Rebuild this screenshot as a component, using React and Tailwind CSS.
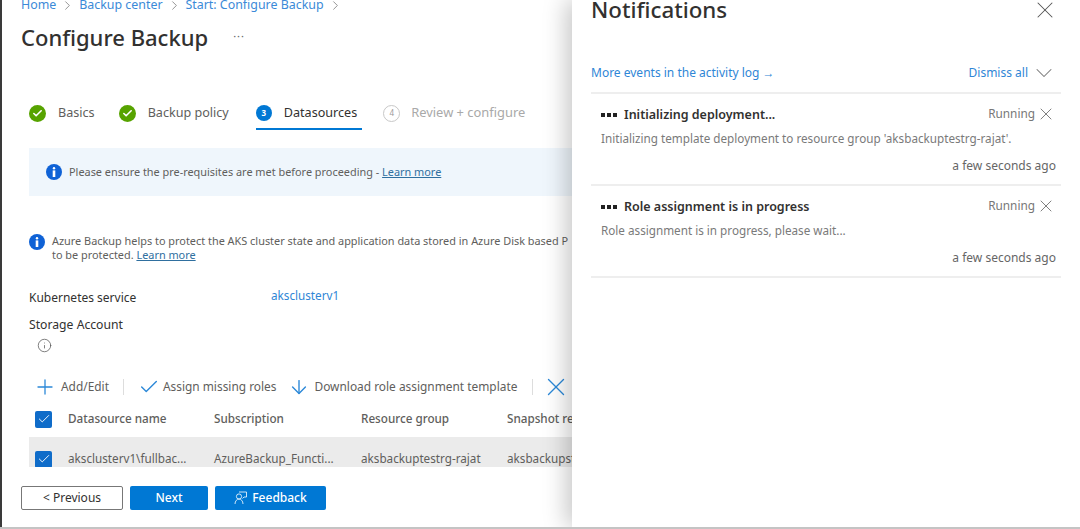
import React from "react";
import { Check, ChevronDown, ChevronRight, Plus, X, ArrowDown, Info } from "lucide-react";

const tableCols = ["w-[146px]", "w-[147px]", "w-[146px]", "w-[70px]"];

function Crumb({ label }) {
  return (
    <>
      <span className="text-[#3b8ad8]">{label}</span>
      <ChevronRight size={15} strokeWidth={1.1} className="text-[#666] mx-[4px]" />
    </>
  );
}

function Step({ done, num, label, active, muted, className }) {
  return (
    <div className={`flex items-center h-[32px] relative ${className}`}>
      {done && (
        <span className="w-[17px] h-[17px] rounded-full bg-[#57a300] flex items-center justify-center mr-[12px]">
          <Check size={11} strokeWidth={3.5} className="text-white" />
        </span>
      )}
      {active && (
        <span className="w-[16px] h-[16px] rounded-full bg-[#0078d4] text-white text-[8px] font-bold flex items-center justify-center mr-[12px]">
          {num}
        </span>
      )}
      {muted && (
        <span className="w-[17px] h-[17px] rounded-full border border-[#c8c8c8] text-[#999] text-[8px] flex items-center justify-center mr-[11px]">
          {num}
        </span>
      )}
      <span className={active ? "text-[#323130]" : muted ? "text-[#a9a9a9] text-[12.9px]" : "text-[#605e5c]"}>{label}</span>
      {active && <span className="absolute left-0 right-[-5px] bottom-[-1px] h-[2px] bg-[#0078d4]" />}
    </div>
  );
}

function CheckBox() {
  return (
    <span className="w-[17px] h-[17px] bg-[#0f6cc9] rounded-[2px] flex items-center justify-center shrink-0">
      <Check size={14} strokeWidth={1.6} className="text-white" />
    </span>
  );
}

function InfoDot() {
  return (
    <span className="w-[16px] h-[16px] rounded-full bg-[#0f62d6] flex items-center justify-center shrink-0 text-white">
      <svg width="4" height="10" viewBox="0 0 4 10">
        <circle cx="2" cy="1.2" r="1.2" fill="currentColor" />
        <rect x="0.7" y="3.4" width="2.6" height="6.6" fill="currentColor" />
      </svg>
    </span>
  );
}

function Notification({ title, body }) {
  return (
    <div className="border-b-2 border-[#eeeeee] h-[92px] pl-[10px] pr-[5px] flex flex-col">
      <div className="flex items-center h-[20px] mt-[11px]">
        <span className="flex gap-[2px] mr-[7px]">
          <i className="w-[4px] h-[4px] bg-[#222]" />
          <i className="w-[4px] h-[4px] bg-[#222]" />
          <i className="w-[4px] h-[4px] bg-[#222]" />
        </span>
        <span className="text-[12.5px] font-semibold text-[#323130]">{title}</span>
        <span className="ml-auto text-[11.8px] text-[#777] mb-[2px]">Running</span>
        <X size={20} strokeWidth={1} className="text-[#666] ml-[1px] mr-[0px] mb-[2px]" />
      </div>
      <div className="text-[11.7px] text-[#7a7a7a] mt-[3px] leading-[20px]">{body}</div>
      <div className="text-[12px] text-[#666] text-right mt-[8px] leading-[20px]">a few seconds ago</div>
    </div>
  );
}

export default function App() {
  return (
    <div
      className="w-[1080px] h-[529px] flex overflow-hidden bg-white border-b-2 border-[#c4c4c4]"
      style={{ fontFamily: '"Noto Sans", "Open Sans", sans-serif' }}
    >
      {/* blade */}
      <div className="w-[572px] shrink-0 flex flex-col border-l-2 border-[#3a3a3a] overflow-hidden">
        <div className="flex-1 min-h-0 overflow-hidden pl-[19px]">
          <div className="flex items-center h-[10px] text-[12.4px] whitespace-nowrap">
            <Crumb label="Home" />
            <Crumb label="Backup center" />
            <Crumb label="Start: Configure Backup" />
          </div>
          <div className="flex items-center mt-[12px] h-[30px]">
            <h1 className="text-[22px] font-medium text-[#323130] whitespace-nowrap">Configure Backup</h1>
            <span className="ml-[25px] text-[#666] text-[11px] leading-none tracking-[1px] mb-[4px]">···</span>
          </div>

          <div className="pl-[8px]">
            <div className="flex mt-[45px] text-[12.6px] whitespace-nowrap">
              <Step done label="Basics" className="mr-[24px]" />
              <Step done label="Backup policy" className="mr-[27px]" />
              <Step active num="3" label="Datasources" className="mr-[26px]" />
              <Step muted num="4" label="Review + configure" />
            </div>

            <div className="mt-[19px] h-[48px] bg-[#eff6fc] flex items-center pl-[17px] gap-[7px] text-[10.9px] text-[#605e5c] whitespace-nowrap">
              <InfoDot />
              <span>
                Please ensure the pre-requisites are met before proceeding -{" "}
                <span className="text-[#2f6f9f] underline">Learn more</span>
              </span>
            </div>

            <div className="flex mt-[38px] gap-[7px] text-[10.9px] leading-[14px] text-[#605e5c] whitespace-nowrap">
              <InfoDot />
              <div>
                <div>Azure Backup helps to protect the AKS cluster state and application data stored in Azure Disk based P</div>
                <div>
                  to be protected. <span className="text-[#2f6f9f] underline">Learn more</span>
                </div>
              </div>
            </div>

            <div className="flex mt-[27px] text-[12px] h-[18px] items-center">
              <span className="w-[242px] text-[#323130]">Kubernetes service</span>
              <span className="text-[#2f86d6] text-[11.7px] mb-[4px]">aksclusterv1</span>
            </div>
            <div className="mt-[9px] text-[12.2px] text-[#323130] leading-[18px]">Storage Account</div>
            <Info size={15} strokeWidth={1.2} className="text-[#555] mt-[4px] ml-[8px]" />

            <div className="flex items-center mt-[24px] h-[20px] text-[11.9px] text-[#605e5c] whitespace-nowrap">
              <Plus size={24} strokeWidth={1.3} className="text-[#2b88d8] ml-[4px] mr-[4px]" />
              <span>Add/Edit</span>
              <span className="w-px h-[16px] bg-[#ddd] ml-[14px] mr-[14px]" />
              <Check size={22} strokeWidth={1.5} className="text-[#2b88d8] mr-[3px]" />
              <span>Assign missing roles</span>
              <ArrowDown size={22} strokeWidth={1.5} className="text-[#2b88d8] ml-[12px] mr-[4px]" />
              <span>Download role assignment template</span>
              <span className="w-px h-[16px] bg-[#ddd] ml-[15px] mr-[8px]" />
              <X size={30} strokeWidth={1.1} className="text-[#2b88d8]" />
            </div>

            <div className="flex items-center mt-[10px] h-[24px] pl-[6px] text-[11.7px] font-medium text-[#605e5c] whitespace-nowrap">
              <CheckBox />
              <div className="flex ml-[16px]">
                <span className={tableCols[0]}>Datasource name</span>
                <span className={tableCols[1]}>Subscription</span>
                <span className={tableCols[2]}>Resource group</span>
                <span className={tableCols[3]}>Snapshot re</span>
              </div>
            </div>
            <div className="flex items-center mt-[6px] h-[44px] pl-[6px] bg-[#ebebeb] text-[11.7px] text-[#605e5c] whitespace-nowrap overflow-hidden">
              <CheckBox />
              <div className="flex ml-[16px]">
                <span className={tableCols[0]}>aksclusterv1\fullbac...</span>
                <span className={tableCols[1]}>AzureBackup_Functi...</span>
                <span className={tableCols[2]}>aksbackuptestrg-rajat</span>
                <span className={`${tableCols[3]} overflow-hidden`}>aksbackupstrg</span>
              </div>
            </div>
          </div>
        </div>

        {/* footer */}
        <div className="h-[60px] shrink-0 bg-white flex items-start pt-[19px] pl-[19px] gap-[7px] text-[12px]">
          <button className="w-[102px] h-[24px] border border-[#777] rounded-[2px] text-[#323130]">&lt; Previous</button>
          <button className="w-[78px] h-[24px] bg-[#0078d4] rounded-[2px] text-white font-medium">Next</button>
          <button className="w-[111px] h-[24px] bg-[#0078d4] rounded-[2px] text-white font-medium flex items-center justify-center gap-[5px]">
            <svg width="13" height="14" viewBox="0 0 13 14" fill="none" stroke="white" strokeWidth="0.8">
              <circle cx="5" cy="5.5" r="2.6" />
              <path d="M1 13c0-3 2-5 4-5s4 2 4 5" />
              <path d="M5 1h7.5v5H10L8.5 7.5" />
            </svg>
            Feedback
          </button>
        </div>
      </div>

      {/* notifications flyout */}
      <div className="flex-1 min-w-0 relative bg-white pl-[19px] pr-[19px] shadow-[-6px_0_22px_rgba(0,0,0,0.22)]">
        <div className="flex items-center justify-between h-[20px] text-[#323130]">
          <h2 className="text-[22.3px] font-medium whitespace-nowrap">Notifications</h2>
          <X size={28} strokeWidth={0.9} className="text-[#555] mr-[2px]" />
        </div>
        <div className="flex items-center mt-[43px] h-[20px] text-[12px] text-[#2f86d6] whitespace-nowrap">
          <span>More events in the activity log →</span>
          <span className="ml-auto">Dismiss all</span>
          <ChevronDown size={28} strokeWidth={0.9} className="text-[#777] ml-[2px] mr-[3px]" />
        </div>
        <div className="border-b-2 border-[#eeeeee] mt-[9px]" />
        <Notification
          title="Initializing deployment..."
          body="Initializing template deployment to resource group 'aksbackuptestrg-rajat'."
        />
        <Notification title="Role assignment is in progress" body="Role assignment is in progress, please wait..." />
      </div>
    </div>
  );
}
